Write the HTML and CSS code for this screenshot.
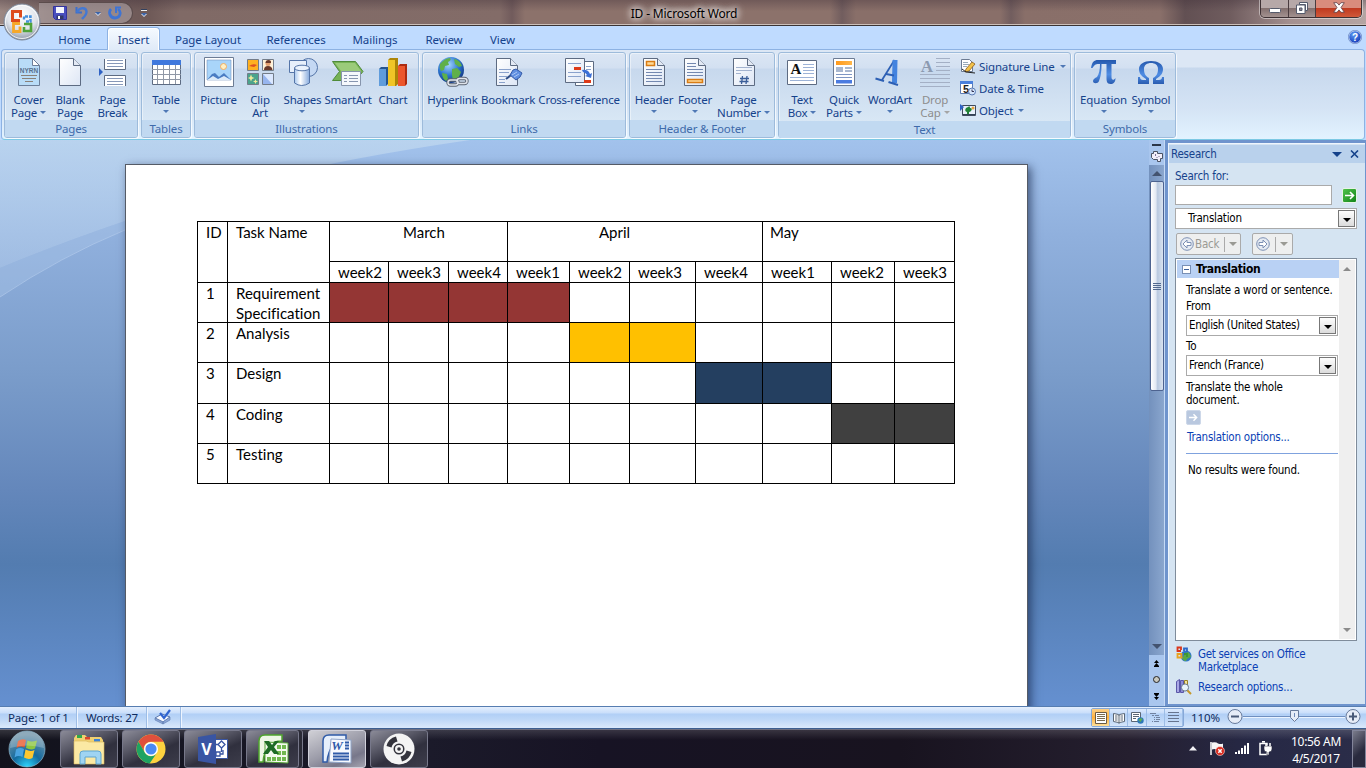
FILE: index.html
```html
<!DOCTYPE html>
<html lang="en">
<head>
<meta charset="utf-8">
<title>ID - Microsoft Word</title>
<link rel="stylesheet" href="styles.css">
</head>
<body>
<svg width="0" height="0" class="defs">
  <defs>
    <linearGradient id="paper" x1="0" y1="0" x2="1" y2="1"><stop offset="0" stop-color="#fff"/><stop offset="1" stop-color="#dde6f5"/></linearGradient>
    <linearGradient id="blue" x1="0" y1="0" x2="0" y2="1"><stop offset="0" stop-color="#2559ae"/><stop offset=".6" stop-color="#4f8de4"/><stop offset="1" stop-color="#2a5cb0"/></linearGradient>
    <linearGradient id="orange" x1="0" y1="0" x2="1" y2="0"><stop offset="0" stop-color="#ff9a1c"/><stop offset="1" stop-color="#ffb64a"/></linearGradient>
    <linearGradient id="haze" x1="0" y1="0" x2="0" y2="1"><stop offset="0" stop-color="#c0d8ef" stop-opacity=".75"/><stop offset="1" stop-color="#b4cdec" stop-opacity=".5"/></linearGradient>
    <linearGradient id="cyl" x1="0" y1="0" x2="1" y2="0"><stop offset="0" stop-color="#a9c8ee"/><stop offset=".4" stop-color="#fff"/><stop offset="1" stop-color="#86aadd"/></linearGradient>
    <radialGradient id="orb" cx=".5" cy=".3" r=".7"><stop offset="0" stop-color="#fff"/><stop offset=".6" stop-color="#dfe3ea"/><stop offset="1" stop-color="#8e98a8"/></radialGradient>
    <radialGradient id="globe" cx=".4" cy=".3" r=".7"><stop offset="0" stop-color="#a6d8ff"/><stop offset=".6" stop-color="#2b74cf"/><stop offset="1" stop-color="#123a86"/></radialGradient>
    <radialGradient id="start" cx=".5" cy="1" r=".9"><stop offset="0" stop-color="#2ed8ff"/><stop offset=".45" stop-color="#146a9e"/><stop offset="1" stop-color="#6f93a8"/></radialGradient>
    <radialGradient id="help" cx=".4" cy=".3" r=".8"><stop offset="0" stop-color="#5e9cf5"/><stop offset="1" stop-color="#0c2fb0"/></radialGradient>
  </defs>
</svg>

<header class="titlebar">
  <div class="qat">
    <svg width="14" height="14" viewBox="0 0 14 14"><path d="M.5.5h13v13h-11l-2-2z" fill="#4a4fc0" stroke="#34349c"/><path d="M3 1h8v6H3z" fill="#f4f6fd"/><path d="M3.500 9.500h7V13h-7z" fill="#333a66"/><path d="M5 10h2v3H5z" fill="#fff"/></svg>
    <svg width="14" height="14" viewBox="0 0 14 14"><path d="M1.500 1v5.500H7" fill="none" stroke="#3d6fcb" stroke-width="2"/><path d="M2 6.500C4 1 11 1 11.500 5.500 11.800 8.500 9.500 10.500 7 13" fill="none" stroke="#4478d2" stroke-width="2.400"/></svg>
    <i class="arrow light"></i>
    <svg class="redo" width="14" height="14" viewBox="0 0 14 14"><path d="M3 3C0 6 2 12 7 12s7-6 3-9" fill="none" stroke="#3f74d3" stroke-width="2.800"/><path d="M7 1.500h6M8 1v6" fill="none" stroke="#3f74d3" stroke-width="2"/></svg>
  </div>
  <div class="qat-more"><b></b><i class="arrow light"></i></div>
  <div class="caption">ID - Microsoft Word</div>
  <div class="window-buttons">
    <span class="min"><svg width="12" height="5"><rect x=".5" y=".5" width="11" height="4" rx="1" fill="#fff" stroke="#555b6c"/></svg></span>
    <span class="max"><svg width="12" height="12" viewBox="0 0 12 12"><path d="M3.500.5h8v8h-2v-6h-6z" fill="#fff" stroke="#555b6c"/><path d="M.5 3h8.500v8.500H.5z" fill="#fff" stroke="#555b6c"/><path d="M3.500 6h2.500v2.500H3.500z" fill="#8b8490" stroke="#555b6c"/></svg></span>
    <span class="close"><svg width="12" height="11" viewBox="0 0 12 11"><path d="M.7.7h3.300L6 3.100 8 .7h3.300L8 5.500l3.300 4.800H8L6 7.900 4 10.300H.7L4 5.500z" fill="#fff" stroke="#5e4048" stroke-width=".8"/></svg></span>
  </div>
</header>

<svg class="office-orb" width="38" height="38" viewBox="0 0 38 38">
  <circle cx="19" cy="19" r="18" fill="url(#orb)" stroke="#7c8798"/>
  <circle cx="19" cy="19" r="16.500" fill="none" stroke="#fff" stroke-opacity=".8"/>
  <g fill="none">
    <path d="M17 17.500H9.500V8.500H17.500v6" stroke="#dd4a1c" stroke-width="3"/>
    <path d="M21 16.500V13.500h6.500v5H23" stroke="#4590dd" stroke-width="2.400" stroke-dasharray="3 1"/>
    <path d="M17 20.500h-6.500v8H17v-5" stroke="#f6a82a" stroke-width="2.800"/>
    <path d="M21 21h7v7H21v-4" stroke="#4fa33a" stroke-width="2.600"/>
  </g>
</svg>

<nav class="tabs">
  <span class="tab t-home">Home</span>
  <span class="tab t-insert active">Insert</span>
  <span class="tab t-layout">Page Layout</span>
  <span class="tab t-refs">References</span>
  <span class="tab t-mail">Mailings</span>
  <span class="tab t-review">Review</span>
  <span class="tab t-view">View</span>
  <svg class="help" width="14" height="14" viewBox="0 0 14 14"><circle cx="7" cy="7" r="6.300" fill="url(#help)" stroke="#dfeaff"/><circle cx="7" cy="7" r="6.700" fill="none" stroke="#4b6fb5" stroke-width=".6"/><text x="7" y="10.800" text-anchor="middle" class="svg-q">?</text></svg>
</nav>

<section class="ribbon">
  <div class="group g-pages">
    <div class="items">
      <div class="btn w41"><svg width="32" height="32" viewBox="0 0 32 32"><path d="M5.500 2.500h14l7 7v20h-21z" fill="#b9dcf7" stroke="#6d7f99"/><path d="M19.500 2.500v7h7z" fill="#fff" stroke="#6d7f99"/><text x="16" y="17" text-anchor="middle" class="svg-nyrn">NYRN</text><path d="M8 19.500h16M9 22.500h14M12 25.500h8" stroke="#8a8178"/></svg><span>Cover<br>Page<i class="arrow"></i></span></div>
      <div class="btn w42"><svg width="32" height="32" viewBox="0 0 32 32"><path d="M5.500 2.500h14l7 7v20h-21z" fill="url(#paper)" stroke="#5d6b82"/><path d="M19.500 2.500v7h7" fill="#e3e9f4" stroke="#5d6b82"/></svg><span>Blank<br>Page</span></div>
      <div class="btn w43"><svg width="32" height="32" viewBox="0 0 32 32"><path d="M7.500 3v10.500h21V3M7.500 30V19.500h21V30" fill="#fff" stroke="#5d6b82"/><path d="M10 4.500h16M10 7.500h16M10 10.500h16M10 22.500h16M10 25.500h16M10 28.500h16" stroke="#8798b8"/><path d="M2 12l4 4-4 4z" fill="#2f62c4"/></svg><span>Page<br>Break</span></div>
    </div>
    <div class="group-name">Pages</div>
  </div>
  <div class="group g-tables">
    <div class="items">
      <div class="btn w42"><svg width="32" height="32" viewBox="0 0 32 32"><path d="M2.500 4.500h28v24h-28z" fill="#fff" stroke="#5d6b82"/><path d="M2 4h29v5H2z" fill="#3f78dd"/><path d="M2 13.500h29M2 18.500h29M2 23.500h29M7.500 9v19M13.500 9v19M19.500 9v19M25.500 9v19" stroke="#9098a6"/></svg><span>Table<br><i class="arrow solo"></i></span></div>
    </div>
    <div class="group-name">Tables</div>
  </div>
  <div class="group g-illus">
    <div class="items">
      <div class="btn w41"><svg width="32" height="32" viewBox="0 0 32 32"><path d="M1.500 1.500h29v29h-29z" fill="#fff" stroke="#6d7c94"/><path d="M4 4h24v20H4z" fill="#a9d5fa" stroke="#7595c0" stroke-width=".6"/><circle cx="20.500" cy="10.500" r="3" fill="#fff0c4" stroke="#f2ae62"/><path d="M4 24l5-6 3-1 4 4 5-4 7 7z" fill="#4a7cc2"/><path d="M4 24l6-4 5 3 6-3 7 4z" fill="#dbeaf9"/></svg><span>Picture</span></div>
      <div class="btn w42"><svg width="32" height="32" viewBox="0 0 32 32"><g stroke="#737c89"><path d="M3.500 3.500h11v11h-11z" fill="#ffb01f"/><path d="M18.500 3.500h11v11h-11z" fill="#fff1d8"/><path d="M3.500 17.500h11v11h-11z" fill="#4ba38c"/><path d="M18.500 17.500h11v11h-11z" fill="#dbe8ff"/></g><path d="M5 10q4-3 8-1l-3 2z" fill="#dd4f22"/><circle cx="24" cy="7.500" r="2.500" fill="#e6a070"/><path d="M21.500 7q0-3 3-3t2.500 3zM20 14q0-4 4-4t4.500 4z" fill="#6b3a2b"/><path d="M7 18.500l1 2.500 2.500 1-2.500 1-1 2.500-1-2.500-2-1 2-1zM11.500 23l.7 1.800 1.800.7-1.800.7-.7 1.800-.7-1.800-1.800-.7 1.800-.7z" fill="#eeeb9a"/><path d="M19 28V18l9 10z" fill="#97b5ef"/></svg><span>Clip<br>Art</span></div>
      <div class="btn w43"><svg width="32" height="32" viewBox="0 0 32 32"><circle cx="21.500" cy="11.500" r="9" fill="#c4d8f3" stroke="#5575a8"/><path d="M2.500 4.500h17v12h-17z" fill="#e6effb" stroke="#5575a8"/><path d="M7.500 12v15q7 5 15 0V12z" fill="url(#cyl)" stroke="#5575a8"/><ellipse cx="15" cy="12" rx="7.500" ry="2.800" fill="#e9f2fd" stroke="#5575a8"/></svg><span>Shapes<br><i class="arrow solo"></i></span></div>
      <div class="btn w48"><svg width="32" height="32" viewBox="0 0 32 32"><path d="M.5 5.500h23l7.500 10-7.500 9H.5l7-9z" fill="#76b255" stroke="#4f8b39"/><path d="M3 7h20l6 8H9z" fill="#9bcb7a"/><path d="M9.500 15.500h19v14h-19z" fill="#f5f8fc" stroke="#8695ac"/><path d="M12 19.500h3M17 19.500h9M12 22.500h3M17 22.500h9M12 25.500h3M17 25.500h9" stroke="#8796b0"/></svg><span>SmartArt</span></div>
      <div class="btn w42"><svg width="32" height="32" viewBox="0 0 32 32"><path d="M2 13l2-2h7v17l-2 2H2z" fill="#25558f"/><path d="M2 13h7v17H2z" fill="#5f9cdc"/><path d="M11 4l2-2h8v26l-2 2h-8z" fill="#ad8507"/><path d="M11 4h7v26h-7z" fill="#f0c527"/><path d="M21 10l2-2h7v20l-2 2h-7z" fill="#ad2b10"/><path d="M21 10h7v20h-7z" fill="#ec562c"/></svg><span>Chart</span></div>
    </div>
    <div class="group-name">Illustrations</div>
  </div>
  <div class="group g-links">
    <div class="items">
      <div class="btn w53"><svg width="32" height="32" viewBox="0 0 32 32"><circle cx="14" cy="14" r="13" fill="url(#globe)"/><path d="M3 8q5-6 10-6 2 2-2 4l1 3-4 1-1 4-3 1q-2-3-1-7zM17 3q6 1 8 7l-3 1-4-3zM15 13l5-1 4 4-3 7-5 2-1-6zM5 17l5 1 1 5-2 2q-4-3-4-8z" fill="#5fb04a"/><g fill="none" stroke="#5b6472" stroke-width="3.400"><rect x="11" y="24" width="10" height="5" rx="2.500"/><rect x="20" y="22.500" width="10" height="5" rx="2.500"/></g><g fill="none" stroke="#dfe3ea" stroke-width="1.500"><rect x="11" y="24" width="10" height="5" rx="2.500"/><rect x="20" y="22.500" width="10" height="5" rx="2.500"/></g></svg><span>Hyperlink</span></div>
      <div class="btn w58"><svg width="32" height="32" viewBox="0 0 32 32"><path d="M4.500 2.500h14l7 7v20h-21z" fill="url(#paper)" stroke="#5d6b82"/><path d="M18.500 2.500v7h7" fill="#e3e9f4" stroke="#5d6b82"/><path d="M7 13.500h12M7 16.500h10M7 20.500h8M7 23.500h6M7 26.500h6" stroke="#8aa2cc"/><path d="M14 23l9-7" stroke="#2f4d86" stroke-width="2"/><path d="M18 19l3-5 3-1 6 4-2 4-4 3z" fill="#5f8ee0" stroke="#3359a8"/><path d="M20 19l5-3M22 21l5-3" stroke="#a9c6f5"/></svg><span>Bookmark</span></div>
      <div class="btn w84"><svg width="32" height="32" viewBox="0 0 32 32"><path d="M17.500 5.500h13v24h-18V20z" fill="#fff" stroke="#5d6b82"/><path d="M2.500 2.500h19v24h-19z" fill="url(#paper)" stroke="#5d6b82"/><path d="M5 7.500h13M5 16.500h13M5 20.500h13M23 10.500h5M23 13.500h5" stroke="#8aa2cc"/><path d="M11 11h7v3h-7zM21 24h7v3h-7z" fill="#dd3a18"/><path d="M19 14q6-1 8 4l2-1-1 5-6-2 2-1q-1-2-4-3z" fill="#3c70d6"/></svg><span>Cross-reference</span></div>
    </div>
    <div class="group-name">Links</div>
  </div>
  <div class="group g-hf">
    <div class="items">
      <div class="btn w42"><svg width="32" height="32" viewBox="0 0 32 32"><path d="M5.500 2.500h14l7 7v20h-21z" fill="url(#paper)" stroke="#5d6b82"/><path d="M19.500 2.500v7h7" fill="#e3e9f4" stroke="#5d6b82"/><path d="M8.500 5.500h8v4h-8z" fill="#ffd994" stroke="#d97c14" stroke-width="1.500"/><path d="M8 13.500h16M8 16.500h16M8 19.500h16M8 22.500h16M8 25.500h16" stroke="#7388b0"/></svg><span>Header<br><i class="arrow solo"></i></span></div>
      <div class="btn w40"><svg width="32" height="32" viewBox="0 0 32 32"><path d="M5.500 2.500h14l7 7v20h-21z" fill="url(#paper)" stroke="#5d6b82"/><path d="M19.500 2.500v7h7" fill="#e3e9f4" stroke="#5d6b82"/><path d="M8.500 23.500h15v3h-15z" fill="#ffd994" stroke="#d97c14" stroke-width="1.500"/><path d="M8 7.500h9M8 10.500h9M8 13.500h16M8 16.500h16M8 19.500h16" stroke="#7388b0"/></svg><span>Footer<br><i class="arrow solo"></i></span></div>
      <div class="btn w57"><svg width="32" height="32" viewBox="0 0 32 32"><path d="M5.500 2.500h14l7 7v20h-21z" fill="url(#paper)" stroke="#5d6b82"/><path d="M19.500 2.500v7h7" fill="#e3e9f4" stroke="#5d6b82"/><path d="M8 11.500h16M8 14.500h16M8 17.500h5" stroke="#a3b3cf"/><path d="M14.500 20l-1 8M19 20l-1 8M12 22.500h9M11.500 25.500h9" stroke="#3b5e98" stroke-width="1.300"/></svg><span>Page<br>Number<i class="arrow"></i></span></div>
    </div>
    <div class="group-name">Header &amp; Footer</div>
  </div>
  <div class="group g-text">
    <div class="items">
      <div class="btn w42"><svg width="32" height="32" viewBox="0 0 32 32"><path d="M1.500 4.500h29v24h-29z" fill="#fff" stroke="#5d6b82"/><text x="10" y="18" text-anchor="middle" class="svg-a">A</text><path d="M17 8.500h11M17 11.500h11M17 14.500h11M17 17.500h11M4 21.500h24M4 24.500h24" stroke="#9db3d7"/></svg><span>Text<br>Box<i class="arrow"></i></span></div>
      <div class="btn w42"><svg width="32" height="32" viewBox="0 0 32 32"><path d="M5.500 2.500h21v27h-21z" fill="#fff" stroke="#6d7c94"/><path d="M8 5h16v4H8z" fill="url(#orange)"/><path d="M8 11h7v5H8zM17 11h7v2h-7zM17 14h7v2h-7z" fill="#a9b8d0"/><path d="M8 18.500h16M8 21.500h16" stroke="#7f97c4"/><path d="M8 24h16v3.500H8z" fill="#4b7be0"/></svg><span>Quick<br>Parts<i class="arrow"></i></span></div>
      <div class="btn w50"><svg width="32" height="32" viewBox="0 0 32 32"><g fill="none" stroke="#2c5fb4" stroke-linejoin="round"><path d="M20.500 4L8 24" stroke-width="1.800"/><path d="M21 4l-.5 23" stroke="#4383df" stroke-width="5"/><path d="M12 18l8 1.500" stroke-width="1.800"/><path d="M1.500 22.500l8.500 2.500M14.500 26l9.500 3" stroke-width="2"/></g></svg><span>WordArt<br><i class="arrow solo"></i></span></div>
      <div class="btn w40 disabled"><svg width="32" height="32" viewBox="0 0 32 32"><text x="8" y="15.500" text-anchor="middle" class="svg-drop">A</text><path d="M17 2.500h14M17 6.500h14M17 10.500h14M17 14.500h14M1 18.500h30M1 22.500h30M1 26.500h30M1 30.500h30" stroke="#a4b0c5"/></svg><span>Drop<br>Cap<i class="arrow"></i></span></div>
      <div class="small-list">
        <div class="small s-sig"><svg width="16" height="16" viewBox="0 0 16 16"><path d="M1.500 1.500h8l3 3v9h-11z" fill="#fff" stroke="#6c7b93"/><path d="M3 4.500h5M3 6.500h6M3 8.500h4" stroke="#9ab"/><path d="M6 11l6-7 3 2-6 7-4 1z" fill="#f2c24a" stroke="#8a5a1a" stroke-width=".8"/><path d="M2 11l4 3 9 1" fill="none" stroke="#222"/></svg><span>Signature Line</span><i class="arrow"></i></div>
        <div class="small s-date"><svg width="16" height="16" viewBox="0 0 16 16"><path d="M.5 1.500h12v12H.5z" fill="#fff" stroke="#5b7bb4"/><path d="M0 1h13v3H0z" fill="#4a80dc"/><text x="6" y="12.500" text-anchor="middle" class="svg-5">5</text><circle cx="12" cy="11.500" r="3.500" fill="#d6e6fb" stroke="#5b7bb4"/><path d="M12 9.500v2h2" fill="none" stroke="#335"/></svg><span>Date &amp; Time</span></div>
        <div class="small s-obj"><svg width="16" height="16" viewBox="0 0 16 16"><path d="M2.500 3.500h13v10h-13z" fill="#e8f0fa" stroke="#3f4b5e"/><path d="M0 2l4 3-4 4z" fill="#2f62c4"/><path d="M8 5q2-2 2 1 3 0 1 3-1 1-2 1v3H7v-3q-3-1-1-4z" fill="#218436"/><circle cx="13" cy="6" r="1.500" fill="#e8a43a"/><path d="M3 12.500h12" stroke="#345"/></svg><span>Object</span><i class="arrow"></i></div>
      </div>
    </div>
    <div class="group-name">Text</div>
  </div>
  <div class="group g-sym">
    <div class="items">
      <div class="btn w49"><svg width="32" height="32" viewBox="0 0 32 32"><path d="M3 12C4 6 6 4 10 4h18v4h-4.500v13c0 3 2 4 4 1 0 4-2 6-5 6-3.500 0-4-3-4-6V8h-5c0 9-1 13-2.500 17-1 3-6 3-6 0 0-2 2-3 4-4 2-3 3-7 3-13-4 0-5 0-7.500 4z" fill="url(#blue)"/></svg><span>Equation<br><i class="arrow solo"></i></span></div>
      <div class="btn w46"><svg width="32" height="32" viewBox="0 0 32 32"><path d="M3 21h2q0 3 3 3h3v-1C6 20 4 17 4 13 4 8 9 5 16 5s12 3 12 8c0 4-2 7-7 10v1h3q3 0 3-3h2v7H18v-6c4-2 5-5 5-9 0-4-3-6-7-6s-7 2-7 6c0 4 1 7 5 9v6H3z" fill="url(#blue)"/></svg><span>Symbol<br><i class="arrow solo"></i></span></div>
    </div>
    <div class="group-name">Symbols</div>
  </div>
</section>

<main class="workspace">
  <div class="desk">
    <svg class="swoosh" width="1150" height="180" viewBox="0 0 1150 180"><path d="M0 0h470Q250 32 125 81 55 105 0 128z" fill="url(#haze)"/><path d="M0 128Q55 105 125 81L180 62V71L125 90Q60 117 0 157z" fill="#a9c5e8" opacity=".4"/><path d="M0 157Q60 117 125 90" fill="none" stroke="#b5cdec" stroke-opacity=".6"/></svg>
    <article class="page">
      <div class="gantt">
        <div class="c head id">ID</div><div class="c head">Task Name</div>
        <div class="c march">March</div><div class="c april">April</div><div class="c may">May</div>
        <div class="c">week2</div><div class="c">week3</div><div class="c">week4</div><div class="c">week1</div><div class="c">week2</div><div class="c">week3</div><div class="c">week4</div><div class="c">week1</div><div class="c">week2</div><div class="c">week3</div>
        <div class="c">1</div><div class="c">Requirement Specification</div><div class="c red"></div><div class="c red"></div><div class="c red"></div><div class="c red"></div><div class="c"></div><div class="c"></div><div class="c"></div><div class="c"></div><div class="c"></div><div class="c"></div>
        <div class="c">2</div><div class="c">Analysis</div><div class="c"></div><div class="c"></div><div class="c"></div><div class="c"></div><div class="c gold"></div><div class="c gold"></div><div class="c"></div><div class="c"></div><div class="c"></div><div class="c"></div>
        <div class="c">3</div><div class="c">Design</div><div class="c"></div><div class="c"></div><div class="c"></div><div class="c"></div><div class="c"></div><div class="c"></div><div class="c navy"></div><div class="c navy"></div><div class="c"></div><div class="c"></div>
        <div class="c">4</div><div class="c">Coding</div><div class="c"></div><div class="c"></div><div class="c"></div><div class="c"></div><div class="c"></div><div class="c"></div><div class="c"></div><div class="c"></div><div class="c gray"></div><div class="c gray"></div>
        <div class="c">5</div><div class="c">Testing</div><div class="c"></div><div class="c"></div><div class="c"></div><div class="c"></div><div class="c"></div><div class="c"></div><div class="c"></div><div class="c"></div><div class="c"></div><div class="c"></div>
      </div>
    </article>
  </div>

  <div class="vscroll">
    <b class="split"></b>
    <svg class="ruler" width="12" height="12" viewBox="0 0 12 12"><path d="M.5 3.500h2v-2h4v2h5v5h-2v3h-3v-2h-4l-2-2z" fill="#f1eefa" stroke="#4a5364"/><path d="M4.500 4v2M8 6v1M6 7v1" stroke="#7a6f96"/></svg>
    <div class="track">
      <i class="up"></i>
      <div class="thumb"><b></b><b></b><b></b><b></b></div>
      <i class="down"></i>
    </div>
    <svg class="browse" width="9" height="44" viewBox="0 0 9 44"><path d="M4.500 2l2.500 3H2zM4.500 5l2.500 3H2zM4.500 42l2.500-3H2zM4.500 39l2.500-3H2z" fill="#000"/><path d="M2 8.500h5M2 35.500h5" stroke="#000"/><circle cx="4.500" cy="21.500" r="3" fill="#c9c9c0" stroke="#222"/></svg>
  </div>

  <aside class="research">
    <div class="pane">
      <div class="pane-title"><span>Research</span><i class="arrow big"></i><svg width="9" height="8" viewBox="0 0 9 8"><path d="M1 .5l7 7M8 .5l-7 7" stroke="#15428b" stroke-width="1.600"/></svg></div>
      <label class="search-label">Search for:</label>
      <div class="search-row"><div class="search-box"></div><span class="go"><svg width="10" height="9" viewBox="0 0 10 9"><path d="M0 4.500h8M5 1l3.500 3.500L5 8" fill="none" stroke="#fff" stroke-width="1.600"/></svg></span></div>
      <div class="select source"><span>Translation</span><b class="drop"><i></i></b></div>
      <div class="nav-row">
        <div class="nav-btn back"><svg width="14" height="14" viewBox="0 0 14 14"><circle cx="7" cy="7" r="6.300" fill="#e6ebf3" stroke="#7d90b4"/><path d="M11 5.500H7V3L3 7l4 4V8.500h4z" fill="#fff" stroke="#7d90b4"/></svg><span>Back</span><b></b><i class="arrow"></i></div>
        <div class="nav-btn fwd"><svg width="14" height="14" viewBox="0 0 14 14"><circle cx="7" cy="7" r="6.300" fill="#e6ebf3" stroke="#7d90b4"/><path d="M3 5.500h4V3l4 4-4 4V8.500H3z" fill="#fff" stroke="#7d90b4"/></svg><b></b><i class="arrow"></i></div>
      </div>
      <div class="results">
        <div class="results-body">
          <div class="results-head"><span class="minus"></span>Translation</div>
          <div class="results-text">
            <p class="r1">Translate a word or sentence.</p>
            <p class="r2">From</p>
            <div class="select lang"><span>English (United States)</span><b class="drop"><i></i></b></div>
            <p class="r3">To</p>
            <div class="select lang"><span>French (France)</span><b class="drop"><i></i></b></div>
            <p class="r4">Translate the whole document.</p>
            <span class="go off"><svg width="9" height="9" viewBox="0 0 10 9"><path d="M0 4.500h8M5 1l3.500 3.500L5 8" fill="none" stroke="#fff" stroke-width="1.600"/></svg></span>
            <p class="link r5">Translation options...</p>
            <p class="r6">No results were found.</p>
          </div>
        </div>
        <div class="results-scroll"><i class="up"></i><i class="down"></i></div>
      </div>
      <div class="foot f1"><svg width="16" height="16" viewBox="0 0 16 16"><circle cx="10" cy="10" r="5.500" fill="#2f75c8"/><path d="M6 12q3-5 6-6 3 2 3 5-4 1-5 4-3 0-4-3z" fill="#59a847"/><g fill="none" stroke-width="1.800"><path d="M5 5H1.500V1.500H5V4" stroke="#d9361b"/><path d="M8 5V2.500h3V6" stroke="#2c66c8"/><path d="M1.500 8h4v3.500h-4z" stroke="#e9a320"/><path d="M8 8h3v3" stroke="#3d9632"/></g></svg><span>Get services on Office Marketplace</span></div>
      <div class="foot f2"><svg width="16" height="16" viewBox="0 0 16 16"><path d="M.5 2.500l3-2v13h-3z" fill="#a9a7e6" stroke="#5a57a8"/><path d="M4.500 1.500h3v12h-3z" fill="#8d8bd8" stroke="#5a57a8"/><path d="M8.500 1.500h3v10h-3z" fill="#f3e5a0" stroke="#9b8127"/><circle cx="9" cy="8.500" r="3.600" fill="#e9f3fc" stroke="#6a7890"/><path d="M11.500 11.500l3.500 3.500" stroke="#c6982a" stroke-width="2"/></svg><span>Research options...</span></div>
    </div>
  </aside>
</main>

<footer class="status">
  <span class="cell s-page">Page: 1 of 1</span>
  <span class="cell s-words">Words: 27</span>
  <span class="cell s-proof"><svg width="17" height="16" viewBox="0 0 17 16"><path d="M1 9l7-4 8 3-7 5z" fill="#f5f8ff" stroke="#5b78ae"/><path d="M1 9v2l8 4v-2zM9 13v2l7-4V8z" fill="#8fa8d6" stroke="#5b78ae" stroke-width=".6"/><path d="M6 4l4 5 6-8" fill="none" stroke="#2f64d0" stroke-width="2.200"/></svg></span>
  <span class="fill"></span>
  <div class="views">
    <span class="on"><svg width="12" height="12" viewBox="0 0 12 12"><path d="M.5.5h11v11H.5z" fill="#fff" stroke="#6a5b45"/><path d="M2 2.500h8M2 4.500h8M2 6.500h8M2 8.500h8" stroke="#7b6c50"/></svg></span>
    <span><svg width="12" height="12" viewBox="0 0 12 12"><path d="M.5 1.500l5 1 .5 1 .5-1 5-1v8l-5 1-.5 1-.5-1-5-1z" fill="#fff" stroke="#5a6675"/><path d="M6 3v8M2 4h2.500M2 6h2.500M2 8h2.500M7.500 4H10M7.500 6H10M7.500 8H10" stroke="#5a6675"/></svg></span>
    <span><svg width="13" height="12" viewBox="0 0 13 12"><path d="M.5.500h9v9h-9z" fill="#fff" stroke="#5a6675"/><path d="M2 2.500h6M2 4.500h6M2 6.500h3" stroke="#5a6675"/><circle cx="9.500" cy="8.500" r="3.200" fill="#2d78b8"/><path d="M7.500 8q2-3 4-1l-2 3z" fill="#5fae52"/></svg></span>
    <span><svg width="10" height="10" viewBox="0 0 10 10"><path d="M0 .5h6M2 2.500h2M5 2.500h4M4 4.500h1M6 4.500h4M4 6.500h1M6 6.500h4M2 8.500h1M4 8.500h5" stroke="#7182a0"/></svg></span>
    <span><svg width="11" height="11" viewBox="0 0 11 11"><path d="M0 .5h11M0 3.500h11M0 6.500h11M0 9.500h11" stroke="#66748e"/></svg></span>
  </div>
  <span class="pct">110%</span>
  <svg class="zoombar" width="136" height="18" viewBox="0 0 136 18"><path d="M17 9.500h102" stroke="#6f8fc0"/><path d="M17 10.500h102" stroke="#eaf3ff"/><g fill="#e6ecf7" stroke="#67799a"><circle cx="9" cy="9.500" r="7"/><circle cx="127" cy="9.500" r="7"/><path d="M64.500 3.500h8v7l-4 4-4-4z"/></g><path d="M5 9.500h8M123 9.500h8M127 5.500v8" stroke="#4a5a78" stroke-width="2"/><path d="M68.500 6v4" stroke="#6f89b8"/></svg>
</footer>

<footer class="taskbar">
  <svg class="start" width="38" height="38" viewBox="0 0 38 38"><circle cx="19" cy="19" r="18" fill="url(#start)" stroke="#8fb4c8" stroke-opacity=".7"/><path d="M10 11q4-3 8-1l-1.500 7.500q-4-2-8 .5z" fill="#e8572a"/><path d="M19.500 10.500q4 2 9.500 0l-2 8q-4 2-9-.5z" fill="#8cc63f"/><path d="M8 19.500q4-2.500 8-.5L14.500 27q-4-2-8 .5z" fill="#4aa3e0"/><path d="M17.500 19.500q5 2.500 9 .5l-2 8q-4 2-8.500-.5z" fill="#fdc730"/><path d="M2 18Q3 2 19 1.500 35 2 36 18q-17-5-34 0z" fill="#fff" opacity=".22"/></svg>
  <div class="task"><svg width="34" height="32" viewBox="0 0 34 32"><path d="M2 5l2-3h9l2 2h14l2 3v22H2z" fill="#efd072"/><path d="M5 2h5v3H5z" fill="#2fa84a"/><path d="M13 4h5v2.500h-5z" fill="#d8452c"/><path d="M22 6h6v2.500h-6z" fill="#3b82d6"/><path d="M2 8h12l3 1h15v22H2z" fill="#fbe9a4" stroke="#d8b658" stroke-width=".6"/><path d="M8 31V21q0-3 3-3h15q3 0 3 3v10h-5v-7H13v7z" fill="#9fd4f2" stroke="#5fa5cf"/></svg></div>
  <div class="task"><svg width="30" height="30" viewBox="0 0 30 30"><circle cx="15" cy="15" r="14.500" fill="#fdd23f"/><path d="M2.500 7.700A14.500 14.500 0 0 1 27.600 7.700H15a7.200 7.200 0 0 0-6.300 10.800z" fill="#e0503c"/><path d="M2.500 7.700A14.500 14.500 0 0 0 13.600 29.400L21.200 18.600a7.200 7.200 0 0 1-12.400 0z" fill="#1ea362"/><circle cx="15" cy="15" r="7" fill="#fff"/><circle cx="15" cy="15" r="5.600" fill="#4a8af4"/></svg></div>
  <div class="task"><svg width="30" height="30" viewBox="0 0 30 30"><path d="M16 5.500h13.500v19H16z" fill="#fff" stroke="#3955a3"/><path d="M23.500 7l3.500 3.500-3.500 3.500-3.500-3.500zM23.500 14v4M18 10.500h2M18 18h4v4h-4zM22 20h3v-4" fill="none" stroke="#3955a3" stroke-width="1.300"/><path d="M0 3l18-3v30L0 27z" fill="#3955a3"/><text x="8.500" y="20.500" text-anchor="middle" class="svg-v">V</text></svg></div>
  <div class="task stacked"><svg width="32" height="32" viewBox="0 0 32 32"><path d="M2 8q0-6 6-6h17v6q-17 0-19 21H2z" fill="#eef7e6" stroke="#4fa52e" stroke-width="1.500"/><path d="M8 9l23 1v20l-23-1z" fill="#f4faee" stroke="#54a336"/><g fill="#71b84f"><path d="M20 12h4v4h-4zM25 12h4v4h-4zM20 18h4v4h-4zM25 18h4v4h-4zM20 24h4v4h-4zM25 24h4v4h-4zM10 24h4v4h-4zM15 24h4v4h-4z"/></g><path d="M7 8h5l3 4 3-4h4l-5 6 5 7h-5l-3-4-3 4H6l5-7z" fill="#1d6b25"/></svg></div>
  <div class="task current"><svg width="32" height="32" viewBox="0 0 32 32"><path d="M2 8q0-6 6-6h17v6q-17 0-19 21H2z" fill="#e6effb" stroke="#2f5ba8" stroke-width="1.500"/><path d="M10 6l20 1v23l-22-1z" fill="#f6f9fe" stroke="#8fa4c8"/><text x="16" y="17" text-anchor="middle" class="svg-w">W</text><path d="M24 9.500h4M24 12.500h4M24 15.500h4M12 20.500h16M12 23.500h16M12 26.500h16" stroke="#2f5ba8" stroke-width="1.800"/></svg></div>
  <div class="task"><svg width="32" height="32" viewBox="0 0 32 32"><circle cx="16" cy="16" r="15.500" fill="#f4f4f4"/><circle cx="16" cy="16" r="5.500" fill="#33333c"/><circle cx="16" cy="16" r="4" fill="#f4f4f4"/><circle cx="16" cy="16" r="1.800" fill="#33333c"/><path d="M3.500 13A13 13 0 0 1 13 3.500l1.500 5A8 8 0 0 0 8.500 14.500zM28.500 19A13 13 0 0 1 19 28.500l-1.500-5A8 8 0 0 0 23.500 17.500z" fill="#33333c"/></svg></div>
  <span class="fill"></span>
  <svg class="tray" width="86" height="16" viewBox="0 0 86 16"><path d="M0 9.500h8L4 5z" fill="#f2f2f5"/><path d="M22 1v13" stroke="#fff" stroke-width="1.500"/><path d="M23 1.500q4-1 6 1 3 1 5 0v7q-3 1-6-1-3-1-5 0z" fill="#f5f5f5"/><circle cx="31" cy="10" r="4.500" fill="#d82c20" stroke="#fff" stroke-width=".5"/><path d="M29.300 8.300l3.400 3.400M32.700 8.300l-3.400 3.400" stroke="#fff" stroke-width="1.500"/><path d="M46 11h2v2h-2zM49 9.500h2V13h-2zM52 7h2v6h-2zM55 4.500h2V13h-2zM58 2h2v11h-2z" fill="#fff"/><path d="M71 2.500h7v11h-7zM73 .8h3" fill="none" stroke="#fff" stroke-width="1.500"/><path d="M75 5h8v3q0 3-3 3v3h-2v-3q-3 0-3-3z" fill="#fff" stroke="#222238" stroke-width=".6"/><path d="M77 2v3M81 2v3" stroke="#fff" stroke-width="1.500"/></svg>
  <div class="clock">10:56 AM<br>4/5/2017</div>
  <div class="peek"></div>
</footer>
</body>
</html>
```
FILE: styles.css
```css
* { box-sizing: border-box; }
body {
  margin: 0; width: 1366px; height: 768px; overflow: hidden; position: relative;
  display: flex; flex-direction: column;
  font: 11.500px/13px "Noto Sans", sans-serif; color: #15428b; background: #bfdbff;
}
p { margin: 0; }
svg { display: block; flex: none; }
.defs { position: absolute; }
.fill { flex: 1; }

.arrow { display: inline-block; width: 0; height: 0; border: 3px solid transparent; border-top-color: #4f78b5; border-bottom: 0; }
.svg-q { font: bold 10px "Liberation Sans", sans-serif; fill: #fff; }
.svg-nyrn { font: bold 6.500px "Liberation Sans", sans-serif; fill: #58718c; }
.svg-a { font: bold 15px "Liberation Serif", serif; fill: #111; }
.svg-drop { font: bold 17px/17px "Liberation Serif", serif; fill: #8c9ab0; }
.svg-5 { font: bold 11px "Liberation Sans", sans-serif; fill: #222; }
.svg-v { font: bold 16px "Open Sans", sans-serif; fill: #fff; }
.svg-w { font: italic bold 13px "Liberation Serif", serif; fill: #2f5ba8; }

/* Title bar */
.titlebar {
  height: 26px; flex: none; display: flex; position: relative;
  border-bottom: 1px solid #3b3434; box-shadow: inset 0 -1px #cbbfb9;
  background:
    linear-gradient(180deg, rgba(60,45,55,.35), rgba(60,45,55,0) 45%),
    linear-gradient(90deg, #9c8883 0, #75615f 60px, #6f5a58 150px, #806a66 180px, #836c68 500px, #715b5c 512px, #8c726b 525px, #8c726b 830px, #715d5e 842px, #896f69 856px, #896f69 1000px, #715d5e 1011px, #896f69 1025px, #8a706a 1160px, #625053 1185px, #6f5c5e 1230px, #a4908f 1290px, #b5a5a3);
}
.qat {
  margin: 2px 0 0 39px; width: 94px; height: 22px; padding-left: 14px;
  display: flex; align-items: center; gap: 8px;
  border: 1px solid #5b4c4c; border-left: 0; border-radius: 0 11px 11px 0;
  background: rgba(190,180,182,.5);
}
.qat svg { margin-top: -1px; }
.qat .arrow { margin-left: -2px; }
.qat .redo { margin-left: -1px; }
.arrow.light { border-top-color: #3c64a8; filter: drop-shadow(0 1px #e6ebf5); }
.qat-more { width: 6px; margin: 9px 0 0 8px; display: flex; flex-direction: column; gap: 2px; }
.qat-more b { height: 2px; background: #33415f; border-bottom: 1px solid #eee; }
.caption {
  width: 130px; margin: 7px 0 0 472px; color: #000; text-align: center; font-size: 12px; letter-spacing: -.15px; white-space: nowrap;
  text-shadow: 0 0 6px #fff, 0 0 8px #fff, 0 0 8px rgba(255,255,255,.8);
}
.window-buttons {
  margin-left: auto; margin-right: 4px; width: 102px; height: 18px; display: flex;
  border: 1px solid #3d3134; border-top: 0; border-radius: 0 0 5px 5px; overflow: hidden;
  box-shadow: 0 0 0 1px rgba(255,255,255,.45);
}
.window-buttons span { display: flex; align-items: center; justify-content: center; background: linear-gradient(#b6a8a8 0 45%, #83706f 50%, #a39290); border-right: 1px solid #4a3c3f; }
.window-buttons .min { width: 28px; padding-top: 3px; }
.window-buttons .max { width: 27px; padding-bottom: 2px; }
.window-buttons .close { flex: 1; border: 0; background: linear-gradient(#d98c7c 0 45%, #c03a20 50%, #d0593a); padding-bottom: 2px; }
.office-orb { position: absolute; left: 3px; top: 3px; z-index: 3; }

/* Tabs */
.tabs { height: 23px; flex: none; display: flex; background: #bfdbff; position: relative; z-index: 2; }
.tab { height: 24px; padding-top: 7px; text-align: center; letter-spacing: -.05px; white-space: nowrap; }
.t-home { width: 65px; margin-left: 42px; }
.t-insert { width: 53px; }
.t-layout { width: 96px; }
.t-refs { width: 80px; }
.t-mail { width: 78px; }
.t-review { width: 60px; }
.t-view { width: 57px; }
.tab.active { margin-top: 1px; padding-top: 5px; height: 23px; border: 1px solid #8db2e3; border-bottom: 0; border-radius: 4px 4px 0 0; background: linear-gradient(#f5faff, #dfeaf8); box-shadow: inset 1px 1px #fff, inset -1px 0 #fff; }
.help { margin: 4px 4px 0 auto; }

/* Ribbon */
.ribbon {
  height: 91px; flex: none; margin: 0 1px; padding: 2px 2px 0; display: flex; gap: 3px;
  border: 1px solid #8db2e3; border-radius: 4px; border-bottom-color: #7cc9e4;
  background: linear-gradient(#dce7f5 0 17px, #c7d8ed 18px, #d5e4f5 60px, #e2f3ff);
}
.group {
  height: 86px; display: flex; flex-direction: column; border: 1px solid #9dbbdb; border-radius: 3px;
  background: linear-gradient(#dbe6f4 0, #d3e0f1 15px, #c7d8ed 16px, #d8e7f5 68px); box-shadow: 1px 1px rgba(255,255,255,.7), inset 1px 1px rgba(255,255,255,.45);
}
.g-pages { width: 134px; } .g-tables { width: 50px; } .g-illus { width: 225px; }
.g-links { width: 204px; } .g-hf { width: 146px; } .g-text { width: 293px; } .g-sym { width: 102px; }
.items { height: 68px; padding: 3px 0 0 3px; display: flex; }
.g-text .items { padding-left: 2px; } .g-sym .items { padding-left: 4px; }
.group-name { flex: 1; text-align: center; line-height: 17px; letter-spacing: -.15px; color: #3e6aaa; background: #c1d9f1; border-radius: 0 0 2px 2px; }
.btn { flex: none; display: flex; flex-direction: column; align-items: center; text-align: center; }
.btn span { margin-top: 5px; white-space: nowrap; letter-spacing: -.18px; }
.w84 span { letter-spacing: -.25px; }
.btn .arrow { margin-left: 3px; vertical-align: 3px; }
.btn .arrow.solo { margin-left: 0; vertical-align: 4px; }
.disabled { color: #8d8d8d; }
.disabled .arrow { border-top-color: #a5a5a5; }
.w40 { width: 40px; } .w41 { width: 41px; } .w42 { width: 42px; } .w43 { width: 43px; } .w46 { width: 46px; } .w48 { width: 48px; } .w49 { width: 49px; }
.w50 { width: 50px; } .w53 { width: 53px; } .w57 { width: 57px; } .w58 { width: 58px; } .w84 { width: 84px; }
.small-list { padding-left: 5px; margin-top: -1px; display: flex; flex-direction: column; }
.small { height: 22px; display: flex; align-items: center; gap: 3px; white-space: nowrap; letter-spacing: -.15px; }
.small .arrow { margin-left: 2px; }

/* Document area */
.workspace { height: 566px; flex: none; display: flex; }
.desk { position: relative; width: 1150px; padding: 24px 0 0 125px; overflow: hidden; background: linear-gradient(#a2c2ec 0, #90b0dd 95px, #7a9cca 235px, #6487bb 350px, #537cb0 424px, #6590d0 566px); }
.swoosh { position: absolute; left: 0; top: 0; }
.page { position: relative; width: 903px; height: 600px; padding: 56px 0 0 71px; border: 1px solid #555b66; background: #fff; box-shadow: 3px 3px 9px rgba(20,35,70,.65); }
.gantt {
  width: 758px; display: grid; border: solid #000; border-width: 1px 0 0 1px; color: #000;
  grid-template-columns: 30px 102px 59px 60px 59px 62px 60px 66px 67px 69px 63px 60px;
  grid-template-rows: 40px 21px 40px 40px 41px 40px 40px;
  font: 15px/20px Lato, sans-serif; font-variant-ligatures: none;
}
.c { border: solid #000; border-width: 0 1px 1px 0; padding-left: 8px; white-space: normal; overflow: hidden; }
.head { grid-row: span 2; }
.march { grid-column: span 3; padding-left: 73px; }
.april { grid-column: span 4; padding-left: 91px; }
.may { grid-column: span 3; padding-left: 7px; }
.red { background: #943634; } .gold { background: #ffc000; } .navy { background: #243f60; } .gray { background: #404040; }

/* Vertical scroll bar */
.vscroll { width: 15px; display: flex; flex-direction: column; align-items: center; background: #a9c6ee; }
.split { width: 9px; height: 2px; margin-top: 4px; background: #2b3648; flex: none; }
.ruler { margin-top: 4px; }
.track { width: 15px; height: 490px; margin-top: 3px; display: flex; flex-direction: column; align-items: center; background: linear-gradient(90deg, #7391bd, #8aa6ce); }
.up, .down { width: 0; height: 0; border: 5px solid transparent; }
.track .up { border-top: 0; border-bottom-color: #43536f; margin: 6px 0 5px; }
.track .down { border-bottom: 0; border-top-color: #43536f; margin: auto 0 6px; }
.thumb { width: 14px; height: 210px; display: flex; flex-direction: column; justify-content: center; align-items: center; gap: 1px; border: 1px solid #4d6390; border-radius: 2px; background: linear-gradient(90deg, #fff, #e3e9f3 40%, #b9c9e0 55%, #d9e3f0); }
.thumb b { width: 8px; height: 1px; background: #52698f; }
.browse { margin-top: 3px; }

/* Research pane */
.research { flex: 1; padding: 3px 1px 2px 2px; background: #6f94cd; border-left: 1px solid #c4d9f5; font: 11.500px/13px "DejaVu Sans Condensed", "DejaVu Sans", sans-serif; letter-spacing: -.22px; }
.pane { height: 561px; width: 197px; margin-left: 1px; background: #d5e4f2; border-top: 1px solid #eef5fd; border-left: 1px solid #eef5fd; }
.pane-title { height: 18px; padding: 0 6px 0 2px; display: flex; align-items: center; background: #b9d1ec; color: #15428b; margin-top: 1px; }
.pane-title span { flex: 1; }
.arrow.big { border-width: 5px 5px 0; border-top-color: #15428b; margin-right: 8px; }
.search-label { display: block; margin: 7px 0 0 6px; color: #15428b; }
.search-row { margin: 2px 0 0 6px; display: flex; align-items: center; }
.search-box { width: 157px; height: 20px; background: #fff; border: 1px solid #aaa; }
.go { width: 15px; height: 15px; margin-left: 10px; display: flex; align-items: center; justify-content: center; border: 1px solid #e7f3e7; border-radius: 2px; background: linear-gradient(135deg, #4fc24a, #13851a); }
.select { display: flex; align-items: center; background: #fff; border: 1px solid #aaa; color: #000; height: 21px; padding: 0 1px 0 2px; white-space: nowrap; }
.select span { flex: 1; }
.source { width: 182px; margin: 3px 0 0 6px; padding-left: 12px; }
.drop { width: 17px; height: 17px; display: flex; align-items: center; justify-content: center; background: linear-gradient(#fdfdfd, #dcdcdc); border: 1px solid #777; }
.drop i { border: 4px solid transparent; border-bottom: 0; border-top-color: #000; margin-top: 2px; }
.nav-row { display: flex; gap: 11px; margin: 4px 0 0 7px; }
.nav-btn { height: 22px; display: flex; align-items: center; border: 1px solid #aaa; border-radius: 2px; background: #eeefef; color: #9a9a94; padding-left: 3px; }
.nav-btn.back { width: 65px; } .nav-btn.fwd { width: 41px; }
.nav-btn span { margin-left: 1px; }
.nav-btn b { width: 1px; height: 15px; margin: 0 4px 0 5px; background: #aaa; }
.nav-btn .arrow { border-width: 4px 4px 0; border-top-color: #9a9a94; }
.results { width: 182px; height: 383px; margin: 3px 0 0 6px; padding: 1px; display: flex; border: 1px solid #7f8c9b; background: #fff; color: #000; }
.results-body { width: 162px; }
.results-head { height: 18px; display: flex; align-items: center; gap: 5px; padding-left: 5px; font-weight: bold; font-size: 12px; background: #b9d1f4; letter-spacing: -.3px; }
.minus { width: 9px; height: 9px; border: 1px solid #7990b5; background: linear-gradient(#3c5f98, #3c5f98) center/5px 1px no-repeat #fff; }
.results-text { padding-left: 9px; white-space: nowrap; }
.r1 { margin-top: 6px; } .r2 { margin-top: 3px; }
.lang { width: 152px; margin-top: 2px; letter-spacing: -.35px; }
.r3 { margin-top: 4px; }
.r4 { margin-top: 5px; width: 110px; white-space: normal; }
.go.off { margin: 3px 0 0; background: #b9c8df; border-color: #cdd8e9; }
.link { color: #0b3fb5; }
.r5 { margin-top: 6px; padding: 0 0 9px 1px; border-bottom: 1px solid #7fa2de; width: 152px; }
.r6 { margin: 10px 0 0 2px; }
.results-scroll { flex: 1; background: #efefef; display: flex; flex-direction: column; align-items: center; justify-content: space-between; padding: 7px 0; }
.results-scroll .up, .results-scroll .down { border-width: 4px; }
.results-scroll .up { border-top: 0; border-bottom-color: #8b8b8b; }
.results-scroll .down { border-bottom: 0; border-top-color: #8b8b8b; }
.foot { display: flex; gap: 6px; margin-left: 7px; color: #0b3fb5; }
.f1 { margin-top: 5px; } .f1 span { width: 125px; margin-top: 2px; letter-spacing: -.3px; }
.f2 { margin-top: 5px; } .f2 span { margin-top: 2px; }

/* Status bar */
.status { height: 23px; flex: none; display: flex; align-items: stretch; color: #0f2c5e; border-top: 1px solid #567db1; border-bottom: 1px solid #3d5f91; background: linear-gradient(#e4effd 0, #c9defa 6px, #b1cff6 7px, #bcd6f7 12px, #dbe9fb); }
.cell { padding-top: 4px; border-right: 1px solid #9dbde6; box-shadow: 1px 0 #eef5ff; letter-spacing: -.2px; white-space: nowrap; }
.s-page { width: 77px; padding-left: 8px; } .s-words { width: 70px; padding-left: 9px; } .s-proof { width: 34px; padding: 2px 0 0 7px; }
.views { width: 93px; display: flex; margin: 1px 0; border: 1px solid #86a8d8; border-radius: 2px; }
.views span { flex: 1; display: flex; align-items: center; justify-content: center; border-right: 1px solid #9dbde6; }
.views .on { background: linear-gradient(#fbd08a, #ffb13c 50%, #ffe09a); }
.pct { width: 42px; padding: 4px 0 0 7px; letter-spacing: -.1px; }
.zoombar { margin: 0 4px 0 0; }

/* Taskbar */
.taskbar { height: 39px; flex: none; display: flex; align-items: center; color: #fff; border-top: 1px solid #6e6f80; background: linear-gradient(180deg, rgba(255,255,255,.14), rgba(255,255,255,0) 10px), linear-gradient(90deg, #12121c, #1b1a2a 430px, #171324 600px, #18131f 900px, #251f2f 1130px, #262845 1250px, #2b2d49); }
.start { margin: 0 14px 0 8px; }
.task { width: 58px; height: 38px; margin-right: 4px; display: flex; align-items: center; justify-content: center; border: 1px solid #77788a; border-radius: 3px; background: linear-gradient(155deg, #8b8b98 0, #585866 35%, #30303e 60%, #3d3d4b); }
.task.stacked { width: 53px; margin-right: 9px; box-shadow: 3px 0 #2a2a36, 4px 0 #77788a; }
.task.current { border-color: #d0d0da; background: linear-gradient(155deg, #d0d0d6, #9b9ba8 50%, #77778a 75%, #a5a5b1); }
.tray { margin-right: 9px; }
.clock { width: 64px; padding-top: 1px; font-size: 12px; text-align: center; line-height: 17px; letter-spacing: -.3px; white-space: nowrap; }
.peek { width: 14px; height: 38px; margin-left: 4px; border: 1px solid #83859b; background: linear-gradient(135deg, #7b7c8c, #292a3e 60%); }
```
